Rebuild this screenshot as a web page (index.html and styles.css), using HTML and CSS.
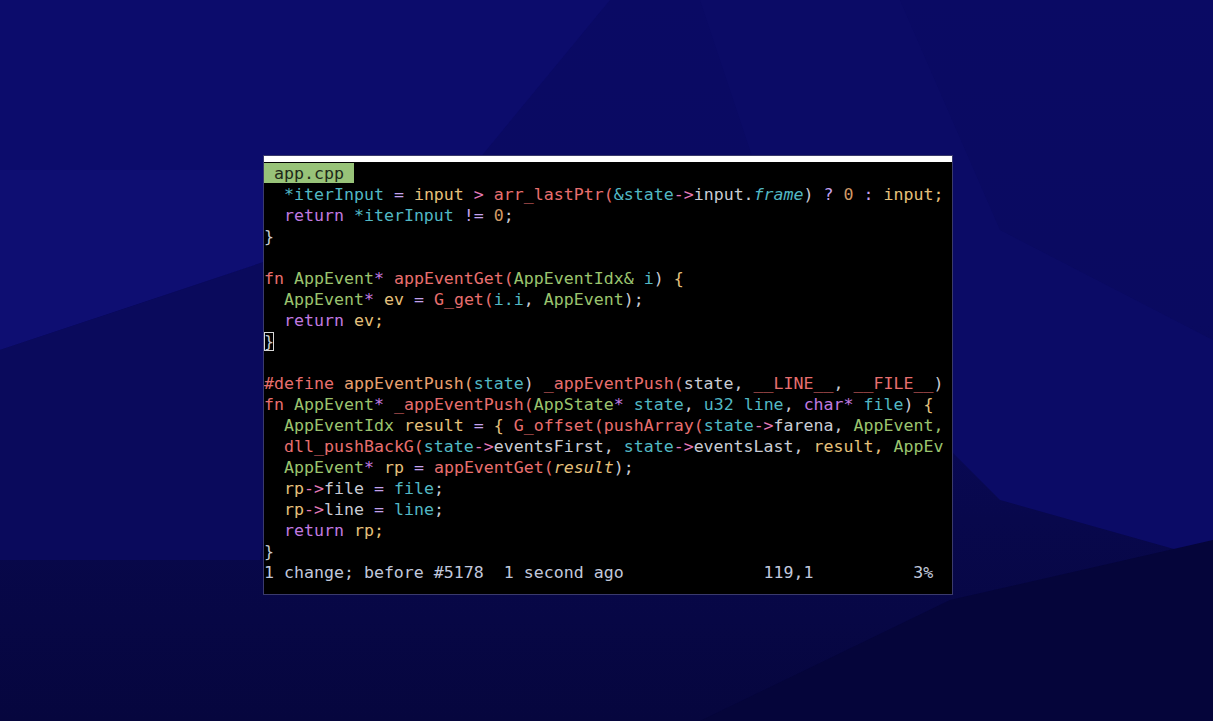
FILE: index.html
```html
<!DOCTYPE html>
<html>
<head>
<meta charset="utf-8">
<link rel="stylesheet" href="styles.css">
</head>
<body>
<div class="bg">
  <div class="shape s1"></div>
  <div class="shape s2"></div>
  <div class="shape s3"></div>
  <div class="shape s4"></div>
  <div class="shape s5"></div>
</div>
<main class="stage">
  <section class="term">
    <div class="topbar"></div>
    <pre class="code"><span class="tab"> app.cpp </span>
  <span class="t">*iterInput</span> <span class="l">=</span> <span class="y">input</span> <span class="p">&gt;</span> <span class="r">arr_lastPtr(</span><span class="t">&amp;state</span><span class="p">-&gt;</span><span class="w">input.</span><span class="t i">frame</span><span class="w">)</span> <span class="l">?</span> <span class="o">0</span> <span class="l">:</span> <span class="y">input;</span>
  <span class="k">return</span> <span class="t">*iterInput</span> <span class="l">!=</span> <span class="o">0</span><span class="w">;</span>
<span class="w">}</span>

<span class="r">fn</span> <span class="g">AppEvent</span><span class="k">*</span> <span class="r">appEventGet(</span><span class="g">AppEventIdx&amp;</span> <span class="t">i</span><span class="w">)</span> <span class="y">{</span>
  <span class="g">AppEvent</span><span class="k">*</span> <span class="y">ev</span> <span class="l">=</span> <span class="r">G_get(</span><span class="t">i.i</span><span class="w">,</span> <span class="g">AppEvent</span><span class="w">);</span>
  <span class="k">return</span> <span class="y">ev;</span>
<span class="cur">}</span>

<span class="r">#define</span> <span class="a">appEventPush(</span><span class="t">state</span><span class="w">)</span> <span class="r">_appEventPush(</span><span class="w">state,</span> <span class="r">__LINE__</span><span class="w">,</span> <span class="r">__FILE__</span><span class="w">)</span>
<span class="r">fn</span> <span class="g">AppEvent</span><span class="k">*</span> <span class="r">_appEventPush(</span><span class="g">AppState</span><span class="k">*</span> <span class="t">state</span><span class="w">,</span> <span class="t">u32 line</span><span class="w">,</span> <span class="k">char*</span> <span class="t">file</span><span class="w">)</span> <span class="y">{</span>
  <span class="g">AppEventIdx</span> <span class="y">result</span> <span class="l">=</span> <span class="y">{</span> <span class="r">G_offset(pushArray(</span><span class="t">state</span><span class="p">-&gt;</span><span class="w">farena,</span> <span class="g">AppEvent,</span>
  <span class="r">dll_pushBackG(</span><span class="t">state</span><span class="p">-&gt;</span><span class="w">eventsFirst,</span> <span class="t">state</span><span class="p">-&gt;</span><span class="w">eventsLast,</span> <span class="y">result,</span> <span class="g">AppEv</span>
  <span class="g">AppEvent</span><span class="k">*</span> <span class="y">rp</span> <span class="l">=</span> <span class="r">appEventGet(</span><span class="y i">result</span><span class="w">);</span>
  <span class="y">rp</span><span class="p">-&gt;</span><span class="w">file</span> <span class="l">=</span> <span class="t">file</span><span class="w">;</span>
  <span class="y">rp</span><span class="p">-&gt;</span><span class="w">line</span> <span class="l">=</span> <span class="t">line</span><span class="w">;</span>
  <span class="k">return</span> <span class="y">rp;</span>
<span class="w">}</span>
<span class="status">1 change; before #5178  1 second ago              119,1          3%</span></pre>
  </section>
</main>
</body>
</html>
```

FILE: styles.css
```css
html, body {
  margin: 0;
  padding: 0;
  width: 1213px;
  height: 721px;
  overflow: hidden;
}
body {
  background: linear-gradient(180deg, #0a0a64 0%, #0a0a60 45%, #08084c 72%, #06063e 100%);
  position: relative;
}
.bg {
  position: absolute;
  inset: 0;
  overflow: hidden;
}
.shape {
  position: absolute;
  inset: 0;
}
.s1 {
  background: #0c0c6c;
  clip-path: polygon(0 0, 610px 0, 470px 170px, 0 170px);
}
.s2 {
  background: #0e0e72;
  clip-path: polygon(0 170px, 470px 170px, 300px 250px, 0 350px);
}
.s3 {
  background: #0b0b66;
  clip-path: polygon(700px 0, 900px 0, 1000px 230px, 1213px 340px, 1213px 560px, 1000px 500px, 800px 300px);
}
.s4 {
  background: #0a0a5c;
  clip-path: polygon(0 350px, 300px 250px, 260px 560px, 0 560px);
}
.s5 {
  background: #05053a;
  clip-path: polygon(700px 721px, 950px 600px, 1213px 540px, 1213px 721px);
}
.stage {
  position: relative;
  padding: 155px 0 0 263px;
}
.term {
  width: 688px;
  border: 1px solid #3a3a6c;
  background: #000000;
}
.topbar {
  height: 6px;
  background: #ffffff;
}
.code {
  margin: 0;
  padding: 1px 0 11px 0;
  font-family: "DejaVu Sans Mono", "Liberation Mono", monospace;
  font-size: 16.6px;
  line-height: 21px;
  color: #c8ccd4;
  white-space: pre;
  overflow: hidden;
}
.tab {
  background: #98c379;
  color: #1f2a18;
  padding: 1px 0 0;
}
.t { color: #52b8c4; }
.y { color: #e5c07b; }
.r { color: #e86f6f; }
.g { color: #9bc46f; }
.k { color: #c07ae0; }
.l { color: #c4a2ee; }
.p { color: #e47ab8; }
.o { color: #d19a66; }
.a { color: #e8a070; }
.w { color: #c8ccd4; }
.i { font-style: italic; }
.cur {
  color: #c8ccd4;
  outline: 1px solid #d8d8d8;
  outline-offset: -1px;
}
.status { color: #c0c8dc; }
```
